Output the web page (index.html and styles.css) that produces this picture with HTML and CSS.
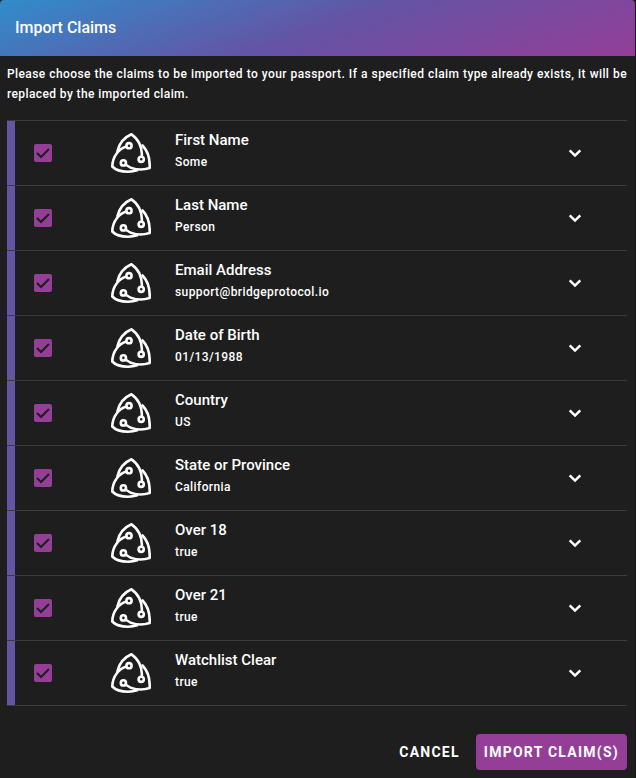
FILE: index.html
```html
<!DOCTYPE html>
<html lang="en">
<head>
<meta charset="utf-8">
<meta name="viewport" content="width=device-width, initial-scale=1">
<title>Import Claims</title>
<link rel="stylesheet" href="styles.css">
</head>
<body>
<svg class="sprite" aria-hidden="true">
  <symbol id="logo" viewBox="0 0 40 40">
    <g fill="none" stroke="currentColor" stroke-width="2.6" stroke-linecap="round" stroke-linejoin="round">
      <path d="M15.300 13.600C8 16 1.500 23 1.300 33.500C5 37.500 11 38.700 17 38.700C20.500 38.700 23 38.400 26 37.300"/>
      <path d="M14.500 31.500C20 36 29 38 38.700 35C39 27 37.500 18.500 31.500 12.500"/>
      <path d="M30.800 23.300C31.500 14 27 5.500 20.500 1.300C13 4.500 8.500 10 6.500 18"/>
      <circle cx="18" cy="12.700" r="2.600"/>
      <circle cx="30.200" cy="26.300" r="2.600"/>
      <circle cx="12.400" cy="29.900" r="2.600"/>
    </g>
  </symbol>
  <symbol id="chevron" viewBox="0 0 24 24">
    <path fill="none" stroke="currentColor" stroke-width="2.500" d="M6.700 9.300L12 14.600l5.300-5.300"/>
  </symbol>
</svg>
<main class="dialog">
  <header class="toolbar"><h1 class="title">Import Claims</h1></header>
  <div class="content">
    <p class="intro">Please choose the claims to be imported to your passport. If a specified claim type already exists, it will be replaced by the imported claim.</p>
    <ul class="claims" id="claims"></ul>
  </div>
  <footer class="actions">
    <button class="btn" type="button">Cancel</button>
    <button class="btn primary" type="button">Import Claim(s)</button>
  </footer>
</main>
<script src="claims.js"></script>
</body>
</html>
```
FILE: styles.css
```css
* { box-sizing: border-box; }

body {
  margin: 0;
  background: #1e1e1e;
  color: #fff;
  font-family: Roboto, sans-serif;
}

.sprite { display: none; }

.dialog {
  min-height: 100vh;
  border-right: 1px solid #141414;
  background: #1e1e1e;
}

.toolbar {
  display: flex;
  align-items: center;
  height: 56px;
  padding: 0 15px;
  border-radius: 4px 4px 0 0;
  background: linear-gradient(160deg, #318ccb 0%, #6454a4 50%, #943e98 100%);
}

.title {
  margin: 0;
  font-size: 16px;
  font-weight: 500;
  line-height: 24px;
}

.content { padding: 8px 8px 0 7px; }

.intro {
  margin: 0 0 16px;
  font-size: 12px;
  font-weight: 500;
  line-height: 20px;
  letter-spacing: 0.0333em;
  text-align: justify;
}

.claims {
  margin: 0;
  padding: 0;
  list-style: none;
  border-top: 1px solid #3b3b3b;
}

.claim {
  display: grid;
  grid-template-columns: 53px 40px 1fr 24px;
  column-gap: 24px;
  align-items: center;
  height: 65px;
  padding: 0 40px 0 27px;
  border-bottom: 1px solid #3b3b3b;
  box-shadow: inset 8px 0 #6454a4;
}

.check {
  appearance: none;
  width: 18px;
  height: 18px;
  margin: 0;
  border-radius: 2px;
  background: #943e98 url("data:image/svg+xml,%3Csvg xmlns='http://www.w3.org/2000/svg' viewBox='0 0 18 18'%3E%3Cpath d='M3 9l4 4 8-8' fill='none' stroke='%231e1e1e' stroke-width='2'/%3E%3C/svg%3E");
}

.check:not(:checked) {
  border: 2px solid #943e98;
  background: none;
}

.logo {
  width: 40px;
  height: 40px;
}

.text {
  align-self: start;
  padding-top: 7px;
  cursor: pointer;
}

.name, .value { display: block; font-weight: 500; }
.name { font-size: 15px; line-height: 24px; }
.value { font-size: 12px; line-height: 20px; letter-spacing: 0.0333em; }

.toggle {
  width: 24px;
  height: 24px;
  padding: 0;
  border: 0;
  background: none;
  color: #fff;
}

.toggle svg { display: block; width: 24px; height: 24px; }

.actions {
  display: flex;
  justify-content: flex-end;
  gap: 8px;
  padding: 28px 8px 8px;
}

.btn {
  height: 36px;
  padding: 0 8px;
  border: 0;
  border-radius: 4px;
  background: none;
  color: #fff;
  font: 700 14px/20px Roboto, sans-serif;
  letter-spacing: 0.0893em;
  text-transform: uppercase;
}

.primary { background: #943e98; }
```
FILE: claims.js
```js
const claims = [
  ["First Name", "Some"],
  ["Last Name", "Person"],
  ["Email Address", "support@bridgeprotocol.io"],
  ["Date of Birth", "01/13/1988"],
  ["Country", "US"],
  ["State or Province", "California"],
  ["Over 18", "true"],
  ["Over 21", "true"],
  ["Watchlist Clear", "true"]
];

document.getElementById("claims").innerHTML = claims.map(([name, value], i) => `
  <li class="claim">
    <input class="check" type="checkbox" id="claim-${i}" checked>
    <svg class="logo" aria-hidden="true"><use href="#logo"/></svg>
    <label class="text" for="claim-${i}">
      <span class="name">${name}</span>
      <span class="value">${value}</span>
    </label>
    <button class="toggle" type="button" aria-label="Show ${name} details">
      <svg aria-hidden="true"><use href="#chevron"/></svg>
    </button>
  </li>`).join("");
```
